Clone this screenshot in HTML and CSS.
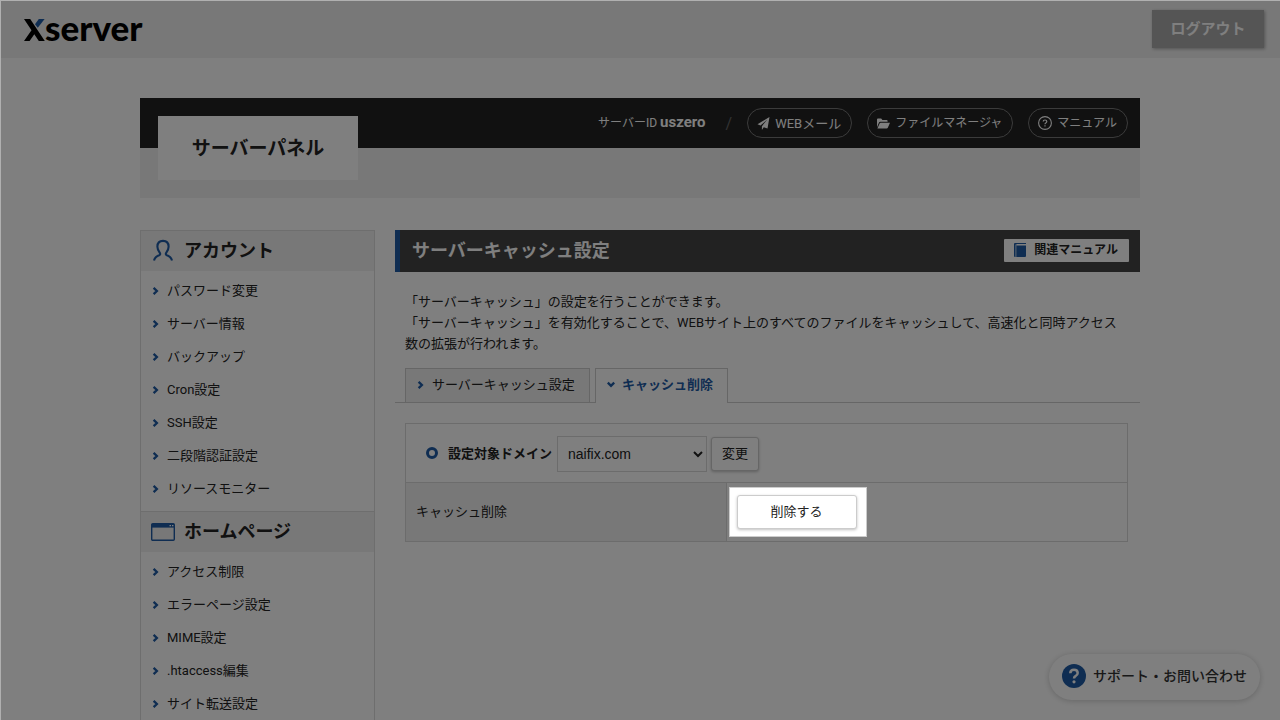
FILE: index.html
```html
<!DOCTYPE html>
<html lang="ja">
<head>
<meta charset="utf-8">
<meta name="viewport" content="width=device-width, initial-scale=1">
<title>サーバーパネル - Xserver</title>
<link rel="stylesheet" href="styles.css">
</head>
<body>
<svg class="defs" aria-hidden="true">
  <symbol id="arrow" viewBox="0 0 8 8"><path d="M1.6 .8 4.9 4 1.6 7.2" fill="none" stroke="currentColor" stroke-width="2.3"/></symbol>
</svg>
<div class="page">
  <header class="site-header">
    <a class="logo" href="#" aria-label="Xserver">
      <svg class="logo-x" viewBox="0 0 21 22" aria-hidden="true"><path d="M0 0H6.2L20.8 22H14.8L10.3 15.2 5.6 22H0L7.5 11.2Z" fill="#000"/><path d="M14.8 0H20.6L13.8 8.8 11 5.2Z" fill="#1f5ba4"/></svg><span>server</span>
    </a>
    <button class="logout" type="button">ログアウト</button>
  </header>

  <div class="container">
    <div class="panel-head">
      <h1 class="panel-title">サーバーパネル</h1>
      <div class="panel-nav">
        <span class="server-id">サーバーID <b>uszero</b></span>
        <span class="slash">/</span>
        <a class="pill mail" href="#"><svg class="pill-icon" viewBox="0 0 12 13" aria-hidden="true"><path d="M12 0 0 7.2 3 8.5 9.8 2.6 4.4 9.2V13L6.3 10.2 10 11.6Z" fill="currentColor"/></svg><span>WEBメール</span></a>
        <a class="pill" href="#"><svg class="pill-icon" viewBox="0 0 13 11" aria-hidden="true"><path d="M0 9.2V1.6Q0 .6 1 .6H4.2L5.4 2H9.6Q10.6 2 10.6 3V3.8H3.4Q2.3 3.8 1.9 4.7Z M.4 10.5 2.6 5.6Q2.9 4.8 3.8 4.8H13L10.8 9.7Q10.4 10.5 9.6 10.5Z" fill="currentColor"/></svg><span>ファイルマネージャ</span></a>
        <a class="pill" href="#"><svg class="pill-icon help" viewBox="0 0 14 14" aria-hidden="true"><circle cx="7" cy="7" r="6.4" fill="none" stroke="currentColor" stroke-width="1.1"/><path d="M5.2 5.6Q5.2 4 7 4T8.8 5.5Q8.8 6.3 7.8 6.9 7 7.4 7 8.2" fill="none" stroke="currentColor" stroke-width="1.2"/><path d="M6.4 9.2H7.6V10.4H6.4Z" fill="currentColor"/></svg><span>マニュアル</span></a>
      </div>
    </div>

    <div class="columns">
      <nav class="sidebar">
        <h2><svg class="head-icon" viewBox="0 0 24 24" aria-hidden="true"><path d="M3 22.5Q4 18.4 8.2 17.2 9.8 16.6 8.8 14.9 6.4 11.6 6.4 8.7C6.4 4.9 8.8 2.9 12 2.9S17.6 4.9 17.6 8.7Q17.6 11.6 15.2 14.9 14.2 16.6 15.8 17.2 20 18.4 21 22.5" fill="none" stroke="currentColor" stroke-width="2.1"/></svg>アカウント</h2>
        <ul>
          <li><a href="#"><svg class="arrow"><use href="#arrow"/></svg>パスワード変更</a></li>
          <li><a href="#"><svg class="arrow"><use href="#arrow"/></svg>サーバー情報</a></li>
          <li><a href="#"><svg class="arrow"><use href="#arrow"/></svg>バックアップ</a></li>
          <li><a href="#"><svg class="arrow"><use href="#arrow"/></svg>Cron設定</a></li>
          <li><a href="#"><svg class="arrow"><use href="#arrow"/></svg>SSH設定</a></li>
          <li><a href="#"><svg class="arrow"><use href="#arrow"/></svg>二段階認証設定</a></li>
          <li><a href="#"><svg class="arrow"><use href="#arrow"/></svg>リソースモニター</a></li>
        </ul>
        <h2><svg class="head-icon" viewBox="0 0 24 24" aria-hidden="true"><rect x=".7" y="4.7" width="22.6" height="16.6" rx="1" fill="none" stroke="currentColor" stroke-width="1.4"/><path d="M1 5H23V8.6H1Z" fill="currentColor"/><path d="M18.5 6H20V7.2H18.5ZM21 6H22.4V7.2H21Z" fill="#fff"/></svg>ホームページ</h2>
        <ul>
          <li><a href="#"><svg class="arrow"><use href="#arrow"/></svg>アクセス制限</a></li>
          <li><a href="#"><svg class="arrow"><use href="#arrow"/></svg>エラーページ設定</a></li>
          <li><a href="#"><svg class="arrow"><use href="#arrow"/></svg>MIME設定</a></li>
          <li><a href="#"><svg class="arrow"><use href="#arrow"/></svg>.htaccess編集</a></li>
          <li><a href="#"><svg class="arrow"><use href="#arrow"/></svg>サイト転送設定</a></li>
        </ul>
      </nav>

      <main class="content">
        <div class="content-head">
          <h2>サーバーキャッシュ設定</h2>
          <a class="related" href="#"><svg class="book" viewBox="0 0 12 14" aria-hidden="true"><path d="M1 0H12V1.1H2.4V2.6H12V13Q12 14 11 14H1Q0 14 0 13V1Q0 0 1 0Z" fill="currentColor"/><path d="M1.9 1.4V14" stroke="#fff" stroke-width=".7"/></svg>関連マニュアル</a>
        </div>
        <p class="lead">「サーバーキャッシュ」の設定を行うことができます。<br>「サーバーキャッシュ」を有効化することで、WEBサイト上のすべてのファイルをキャッシュして、高速化と同時アクセス数の拡張が行われます。</p>
        <div class="tabs">
          <a class="tab" href="#"><svg class="arrow"><use href="#arrow"/></svg>サーバーキャッシュ設定</a>
          <a class="tab active" href="#" aria-current="page"><svg class="arrow down"><use href="#arrow"/></svg>キャッシュ削除</a>
        </div>
        <div class="settings">
          <form class="domain-row">
            <label for="domain">設定対象ドメイン</label>
            <select id="domain"><option>naifix.com</option></select>
            <button class="btn" type="button">変更</button>
          </form>
          <table>
            <tr>
              <th scope="row">キャッシュ削除</th>
              <td><div class="spotlight"><button class="btn wide" type="button">削除する</button></div></td>
            </tr>
          </table>
        </div>
      </main>
    </div>
  </div>

  <a class="support" href="#"><svg class="support-icon" viewBox="0 0 24 24" aria-hidden="true"><circle cx="12" cy="12" r="12" fill="#1f5ba4"/><path d="M8.3 9.2Q8.4 5.8 12 5.8T15.7 9Q15.7 10.6 13.8 11.8 12 12.8 12 14.4" fill="none" stroke="#fff" stroke-width="2.5"/><circle cx="12" cy="17.8" r="1.6" fill="#fff"/></svg>サポート・お問い合わせ</a>
</div>
</body>
</html>
```
FILE: styles.css
```css
*, *::before, *::after {
  box-sizing: border-box;
}

body {
  margin: 0;
  background: #fff;
  color: #222;
  font: 13px/21px Roboto, "Noto Sans CJK JP", sans-serif;
}

a {
  color: inherit;
  text-decoration: none;
}

h1, h2, p, ul {
  margin: 0;
  padding: 0;
}

button, select {
  color: inherit;
  font: inherit;
}

.defs {
  display: none;
}

.page {
  position: relative;
  height: 100vh;
  overflow: hidden;
}

/* light edge along the top and left of the dimmed page */
.page::after {
  content: "";
  position: absolute;
  inset: 0;
  z-index: 20;
  border-top: 1px solid #b0b0b0;
  border-left: 1px solid #b0b0b0;
  pointer-events: none;
}

.site-header {
  display: flex;
  align-items: center;
  justify-content: space-between;
  height: 58px;
  padding: 0 16px 0 24px;
  background: #f0f0f0;
}

.logo {
  display: flex;
  align-items: baseline;
  padding-bottom: 4px;
  color: #000;
  font: 900 35px/40px Lato, sans-serif;
}

.logo-x {
  width: 21px;
  height: 22px;
}

.logout {
  width: 112px;
  height: 38px;
  border: 0;
  background: #aaa;
  box-shadow: 1px 1px 3px rgba(0, 0, 0, .3);
  color: #fff;
  font-size: 15px;
  font-weight: 700;
}

.container {
  max-width: 1000px;
  margin: 40px auto 0;
}

.panel-head {
  display: flex;
  justify-content: space-between;
  height: 100px;
  padding: 0 12px 0 18px;
  background: linear-gradient(#222 50%, #f0f0f0 50%);
}

.panel-title {
  width: 200px;
  height: 64px;
  margin-top: 18px;
  padding-top: 2px;
  background: #fff;
  font-size: 19px;
  font-weight: 700;
  line-height: 62px;
  text-align: center;
}

.panel-nav {
  display: flex;
  align-items: center;
  gap: 15px;
  height: 50px;
  color: #fff;
  font-size: 12px;
}

.server-id b {
  font-size: 15px;
}

.slash {
  margin-left: 5px;
  color: #666;
  font-size: 16px;
}

.pill {
  display: flex;
  align-items: center;
  gap: 5px;
  height: 30px;
  padding: 0 10px 0 9px;
  border: 1px solid #777;
  border-radius: 15px;
}

.pill.mail {
  font-size: 13px;
}

.pill-icon {
  width: 13px;
  height: 13px;
}

.pill-icon.help {
  width: 14px;
  height: 14px;
}

.columns {
  display: flex;
  align-items: flex-start;
  gap: 20px;
  margin-top: 32px;
}

.sidebar {
  flex: 0 0 235px;
  border: 1px solid #ddd;
  border-top: 0;
}

.sidebar h2 {
  display: flex;
  align-items: center;
  gap: 9px;
  height: 41px;
  padding: 0 0 2px 10px;
  border-top: 1px solid #ddd;
  background: #f0f0f0;
  font-size: 18px;
  font-weight: 700;
}

.head-icon {
  width: 24px;
  height: 24px;
  color: #1f5ba4;
}

.sidebar ul {
  padding: 3px 0 6px;
  list-style: none;
}

.sidebar li a {
  display: flex;
  align-items: center;
  gap: 7px;
  height: 33px;
  padding-left: 11px;
}

.arrow {
  flex: none;
  width: 8px;
  height: 8px;
  color: #1f5ba4;
}

.arrow.down {
  transform: rotate(90deg);
}

.content {
  flex: 1;
  min-width: 0;
}

.content-head {
  display: flex;
  align-items: center;
  justify-content: space-between;
  height: 42px;
  padding: 0 11px 2px 12px;
  border-left: 5px solid #1f5ba4;
  background: #444;
}

.content-head h2 {
  color: #fff;
  font-size: 18px;
  font-weight: 700;
}

.related {
  display: flex;
  align-items: center;
  gap: 8px;
  height: 23px;
  padding: 0 11px 0 10px;
  border-radius: 1px;
  background: #fff;
  font-size: 12px;
  font-weight: 700;
}

.book {
  width: 12px;
  height: 14px;
  color: #1f5ba4;
}

.lead {
  margin: 19px 0 14px;
  padding: 0 12px 0 10px;
}

.tabs {
  display: flex;
  gap: 5px;
  height: 35px;
  padding-left: 10px;
  border-bottom: 1px solid #ccc;
}

.tab {
  display: flex;
  align-items: center;
  gap: 7px;
  height: 34px;
  padding: 0 14px 2px 11px;
  border: 1px solid #ccc;
  border-bottom: 0;
  background: #f0f0f0;
}

.tab.active {
  height: 35px;
  padding-bottom: 3px;
  background: #fff;
  color: #1f5ba4;
  font-weight: 700;
}

.settings {
  margin: 20px 12px 0 10px;
  border: 1px solid #d8d8d8;
}

.domain-row {
  display: flex;
  align-items: center;
  gap: 4px;
  height: 58px;
  padding: 2px 20px 0;
}

.domain-row label {
  display: flex;
  align-items: center;
  gap: 10px;
  padding: 0 1px 2px 0;
  font-weight: 700;
}

.domain-row label::before {
  content: "";
  width: 12px;
  height: 12px;
  border: 3px solid #1f5ba4;
  border-radius: 50%;
}

.domain-row select {
  width: 150px;
  height: 36px;
  padding: 0 0 0 6px;
  border: 1px solid #d8d8d8;
  border-radius: 0;
  background: #fff;
  font: 14px "Liberation Sans", Arial, sans-serif;
}

.btn {
  height: 34px;
  padding: 0 10px 2px;
  border: 1px solid #ccc;
  border-radius: 3px;
  background: #fff;
  box-shadow: 0 1px 3px rgba(0, 0, 0, .25);
}

.btn.wide {
  display: block;
  width: 120px;
}

table {
  width: 100%;
  border-collapse: collapse;
  border-top: 1px solid #d8d8d8;
}

th {
  width: 320px;
  padding: 0 10px 2px;
  border-right: 1px solid #d8d8d8;
  background: #f0f0f0;
  font-weight: 400;
  text-align: left;
}

td {
  padding: 4px 2px;
}

/* bright window around the button; its shadow dims the rest of the page */
.spotlight {
  position: relative;
  z-index: 10;
  width: 138px;
  padding: 7px;
  border: 1px solid #ccc;
  background: #fff;
  box-shadow: 0 0 0 2000px rgba(0, 0, 0, .5);
}

.support {
  position: absolute;
  right: 20px;
  bottom: 20px;
  z-index: 5;
  display: flex;
  align-items: center;
  gap: 7px;
  height: 46px;
  padding: 0 13px 2px;
  border-radius: 23px;
  background: #fff;
  box-shadow: 0 1px 6px rgba(0, 0, 0, .2);
  color: #333;
  font-size: 14px;
  font-weight: 500;
}

.support-icon {
  width: 24px;
  height: 24px;
}
```
